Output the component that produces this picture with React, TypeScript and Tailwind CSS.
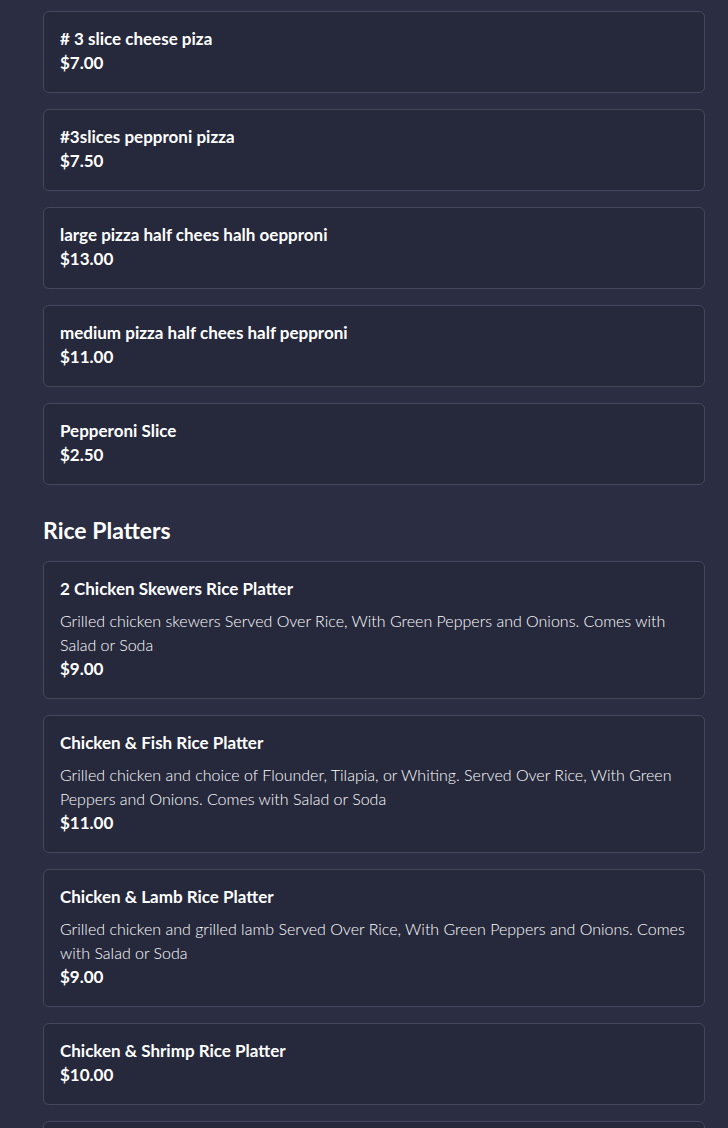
import React from "react";

type Item = { name: string; desc?: string; price: string };

const pizza: Item[] = [
  { name: "# 3 slice cheese piza", price: "$7.00" },
  { name: "#3slices pepproni pizza", price: "$7.50" },
  { name: "large pizza half chees halh oepproni", price: "$13.00" },
  { name: "medium pizza half chees half pepproni", price: "$11.00" },
  { name: "Pepperoni Slice", price: "$2.50" },
];

const rice: Item[] = [
  {
    name: "2 Chicken Skewers Rice Platter",
    desc: "Grilled chicken skewers Served Over Rice, With Green Peppers and Onions. Comes with Salad or Soda",
    price: "$9.00",
  },
  {
    name: "Chicken & Fish Rice Platter",
    desc: "Grilled chicken and choice of Flounder, Tilapia, or Whiting. Served Over Rice, With Green Peppers and Onions. Comes with Salad or Soda",
    price: "$11.00",
  },
  {
    name: "Chicken & Lamb Rice Platter",
    desc: "Grilled chicken and grilled lamb Served Over Rice, With Green Peppers and Onions. Comes with Salad or Soda",
    price: "$9.00",
  },
  { name: "Chicken & Shrimp Rice Platter", price: "$10.00" },
  { name: "Chicken Rice Platter", price: "$8.00" },
];

function Card({ item }: { item: Item }) {
  return (
    <div className="rounded-md border border-[#45475d] bg-[#26283c] px-4 pt-[15px] pb-[17px]">
      <div className="text-[17px] font-bold leading-6 text-white">{item.name}</div>
      {item.desc && (
        <div className="mt-2 text-[16px] font-light leading-6 text-white">{item.desc}</div>
      )}
      <div className="text-[17px] font-bold leading-6 text-white">{item.price}</div>
    </div>
  );
}

export default function App() {
  return (
    <div
      className="min-h-[1128px] bg-[#2b2d42] pt-[11px] pb-10"
      style={{ fontFamily: "Lato, 'Noto Sans', sans-serif" }}
    >
      <div className="ml-[43px] w-[662px]">
        <div className="flex flex-col gap-4">
          {pizza.map((it) => (
            <Card key={it.name} item={it} />
          ))}
        </div>
        <h2 className="mt-[27px] mb-[13px] text-[23px] font-bold leading-9 text-white">Rice Platters</h2>
        <div className="flex flex-col gap-4">
          {rice.map((it) => (
            <Card key={it.name} item={it} />
          ))}
        </div>
      </div>
    </div>
  );
}
